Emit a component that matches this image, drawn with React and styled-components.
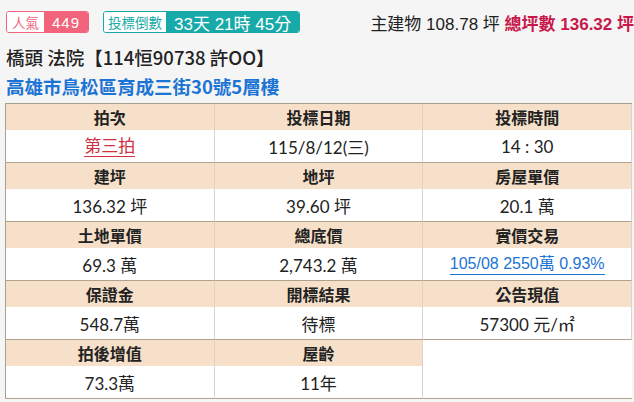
import React from 'react';
import styled, { createGlobalStyle } from 'styled-components';

const GlobalStyle = createGlobalStyle`
  html, body {
    margin: 0;
    padding: 0;
    background: #f5f5f5;
  }
  body {
    font-family: "Noto Sans CJK TC", "Noto Sans", sans-serif;
    color: #222;
  }
`;

const Page = styled.div`
  width: 634px;
  height: 402px;
  overflow: hidden;
  padding: 0 2px 0 5px;
  box-sizing: border-box;
`;

const TopBar = styled.div`
  display: flex;
  align-items: center;
  justify-content: space-between;
  height: 22px;
  margin-top: 11px;
  padding-left: 1px;
  margin-right: -2px;
`;

const Badges = styled.div`
  display: flex;
  gap: 14px;
`;

const Badge = styled.div`
  display: flex;
  height: 22px;
  border: 1px solid ${p => p.color};
  border-radius: 3px;
  overflow: hidden;
  box-sizing: border-box;
`;

const BadgeLabel = styled.span`
  display: flex;
  align-items: center;
  padding: 0 ${p => p.pad}px;
  background: #fff;
  color: ${p => p.color};
  font-size: 13.5px;
`;

const BadgeValue = styled.span`
  display: flex;
  align-items: center;
  padding: 0 ${p => p.pad}px;
  background: ${p => p.color};
  color: #fff;
  font-family: "Liberation Sans", "Noto Sans CJK TC", sans-serif;
  font-size: ${p => p.size}px;
  letter-spacing: ${p => p.spacing}px;
`;

const Area = styled.div`
  font-family: "Liberation Sans", "Noto Sans CJK TC", sans-serif;
  font-size: 17px;
  white-space: nowrap;
  color: #222;
`;

const Total = styled.span`
  color: #c8174a;
  font-weight: bold;
`;

const Title = styled.div`
  margin-top: 11px;
  padding-left: 1px;
  font-size: 18.5px;
  font-weight: 500;
  line-height: 26px;
  color: #222;
`;

const Address = styled.div`
  margin-top: 1px;
  padding-left: 1px;
  font-size: 18.5px;
  font-weight: bold;
  line-height: 30px;
  color: #1c74d4;
`;

const Table = styled.div`
  display: grid;
  grid-template-columns: repeat(3, 1fr);
  margin-top: 2px;
  border-top: 1px solid #a8a091;
  border-left: 1px solid #a8a091;
  background: #fff;
`;

const Head = styled.div`
  height: 26px;
  display: flex;
  align-items: center;
  justify-content: center;
  background: #f6e0c9;
  border-right: 1px solid #e2d2c0;
  font-size: 16px;
  font-weight: bold;
  color: #222;
`;

const Cell = styled.div`
  height: 32px;
  display: flex;
  align-items: center;
  justify-content: center;
  border-right: 1px solid #d8d4cf;
  border-bottom: 1px solid #b1a28d;
  font-family: "Lato", "Noto Sans CJK TC", sans-serif;
  font-size: 17px;
  color: #222;
`;

const Blank = styled.div`
  grid-row: span 2;
  border-bottom: 1px solid #b1a28d;
  background: #fff;
`;

const RedLink = styled.span`
  color: #d0303f;
  border-bottom: 1px solid #d0303f;
  line-height: 21px;
`;

const BlueLink = styled.span`
  font-family: "Liberation Sans", "Noto Sans CJK TC", sans-serif;
  font-size: 16px;
  color: #1c74d4;
  border-bottom: 1px solid #1c74d4;
  line-height: 21px;
`;

const rows = [
  [['拍次', <RedLink>第三拍</RedLink>], ['投標日期', '115/8/12(三)'], ['投標時間', '14 : 30']],
  [['建坪', '136.32 坪'], ['地坪', '39.60 坪'], ['房屋單價', '20.1 萬']],
  [['土地單價', '69.3 萬'], ['總底價', '2,743.2 萬'], ['實價交易', <BlueLink>105/08 2550萬 0.93%</BlueLink>]],
  [['保證金', '548.7萬'], ['開標結果', '待標'], ['公告現值', '57300 元/㎡']],
  [['拍後增值', '73.3萬'], ['屋齡', '11年'], null],
];

export default function App() {
  return (
    <Page>
      <GlobalStyle />
      <TopBar>
        <Badges>
          <Badge color="#f2647c">
            <BadgeLabel color="#f2647c" pad={5}>人氣</BadgeLabel>
            <BadgeValue color="#f2647c" pad={8} size={15} spacing={1}>449</BadgeValue>
          </Badge>
          <Badge color="#18aaa8">
            <BadgeLabel color="#18aaa8" pad={4}>投標倒數</BadgeLabel>
            <BadgeValue color="#18aaa8" pad={8} size={17} spacing={0}>33天 21時 45分</BadgeValue>
          </Badge>
        </Badges>
        <Area>
          主建物 108.78 坪 <Total>總坪數 136.32 坪</Total>
        </Area>
      </TopBar>
      <Title>橋頭 法院【114恒90738 許OO】</Title>
      <Address>高雄市鳥松區育成三街30號5層樓</Address>
      <Table>
        {rows.map((row, i) => (
          <React.Fragment key={i}>
            {row.map((c, j) => c ? <Head key={'h' + j}>{c[0]}</Head> : <Blank key={'b' + j} />)}
            {row.map((c, j) => c ? <Cell key={'c' + j}>{c[1]}</Cell> : null)}
          </React.Fragment>
        ))}
      </Table>
    </Page>
  );
}
